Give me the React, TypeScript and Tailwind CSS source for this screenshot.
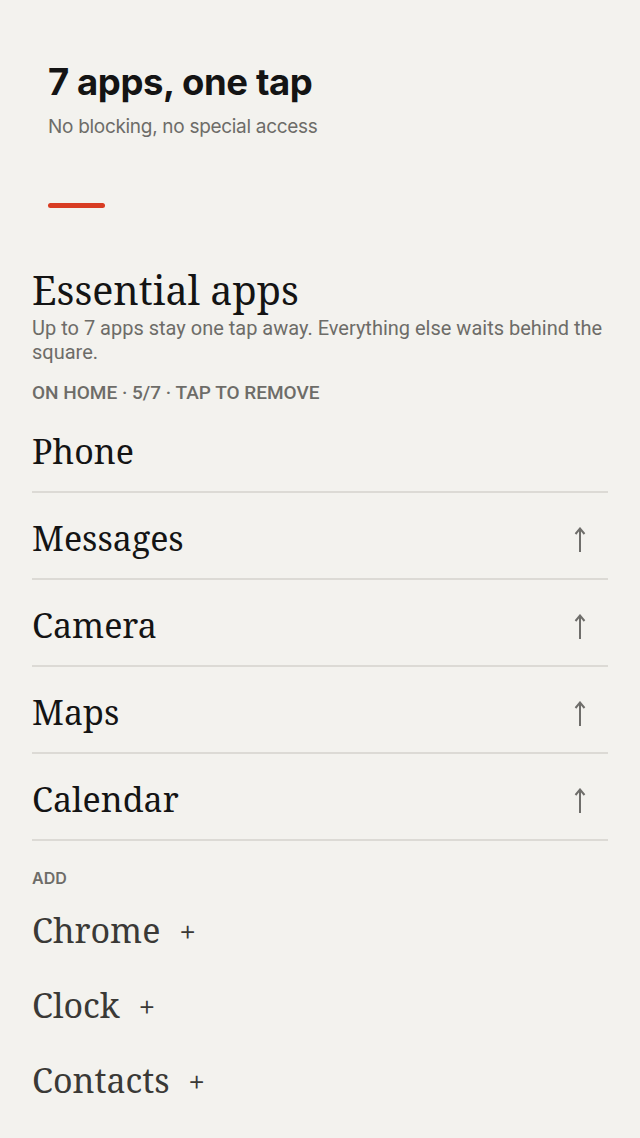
import React from 'react';

const onHome = ['Phone', 'Messages', 'Camera', 'Maps', 'Calendar'];
const toAdd = ['Chrome', 'Clock', 'Contacts'];

const serif = "font-['Noto_Serif','DejaVu_Serif',serif]";

function UpArrow() {
  return (
    <svg width="12" height="26" viewBox="0 0 12 26" fill="none" stroke="#6f6e6b" strokeWidth="2">
      <path d="M6 25V2" />
      <path d="M1.5 7L6 1.5L10.5 7" strokeLinejoin="miter" />
    </svg>
  );
}

export default function App() {
  return (
    <div className="min-h-[1138px] bg-[#f3f2ee] font-['Inter',sans-serif] text-[#141414]">
      <header className="px-12 pt-[60px]">
        <h1 className="text-[36.5px] font-bold leading-[44px] tracking-[-0.4px]">7 apps, one tap</h1>
        <p className="mt-[10px] text-[19px] leading-[26px] text-[#6d6c68] tracking-[-0.3px]">
          No blocking, no special access
        </p>
        <div className="mt-[63px] h-[5px] w-[57px] rounded-full bg-[#d83c23]" />
      </header>

      <section className="px-8 pt-[58px]">
        <h2 className={`${serif} text-[39.5px] leading-[48px] text-[#141414]`}>Essential apps</h2>
        <p className="mt-[2px] font-['Roboto',sans-serif] text-[20px] leading-[24px] text-[#6d6c68]">
          Up to 7 apps stay one tap away. Everything else waits behind the square.
        </p>
        <div className="mt-[17px] font-['Roboto',sans-serif] text-[19px] font-medium leading-[24px] text-[#6d6c68]">
          ON HOME · 5/7 · TAP TO REMOVE
        </div>

        <ul className="mt-[1px]">
          {onHome.map((app, i) => (
            <li
              key={app}
              className="flex h-[87px] items-center justify-between border-b-2 border-[#dcdad5] pt-[4px]"
            >
              <span className={`${serif} text-[34px] leading-[40px] text-[#141414]`}>{app}</span>
              {i > 0 && (
                <span className="mr-[22px] mt-[4px]">
                  <UpArrow />
                </span>
              )}
            </li>
          ))}
        </ul>

        <div className="mt-[26px] text-[16px] font-semibold leading-[22px] text-[#6d6c68]">ADD</div>

        <ul className="mt-[3px]">
          {toAdd.map((app) => (
            <li key={app} className="flex h-[75px] items-center gap-[18px]">
              <span className={`${serif} text-[34px] leading-[40px] text-[#3a3936]`}>{app}</span>
              <span className="text-[28px] font-light leading-[40px] text-[#3a3936]">+</span>
            </li>
          ))}
        </ul>
      </section>
    </div>
  );
}
